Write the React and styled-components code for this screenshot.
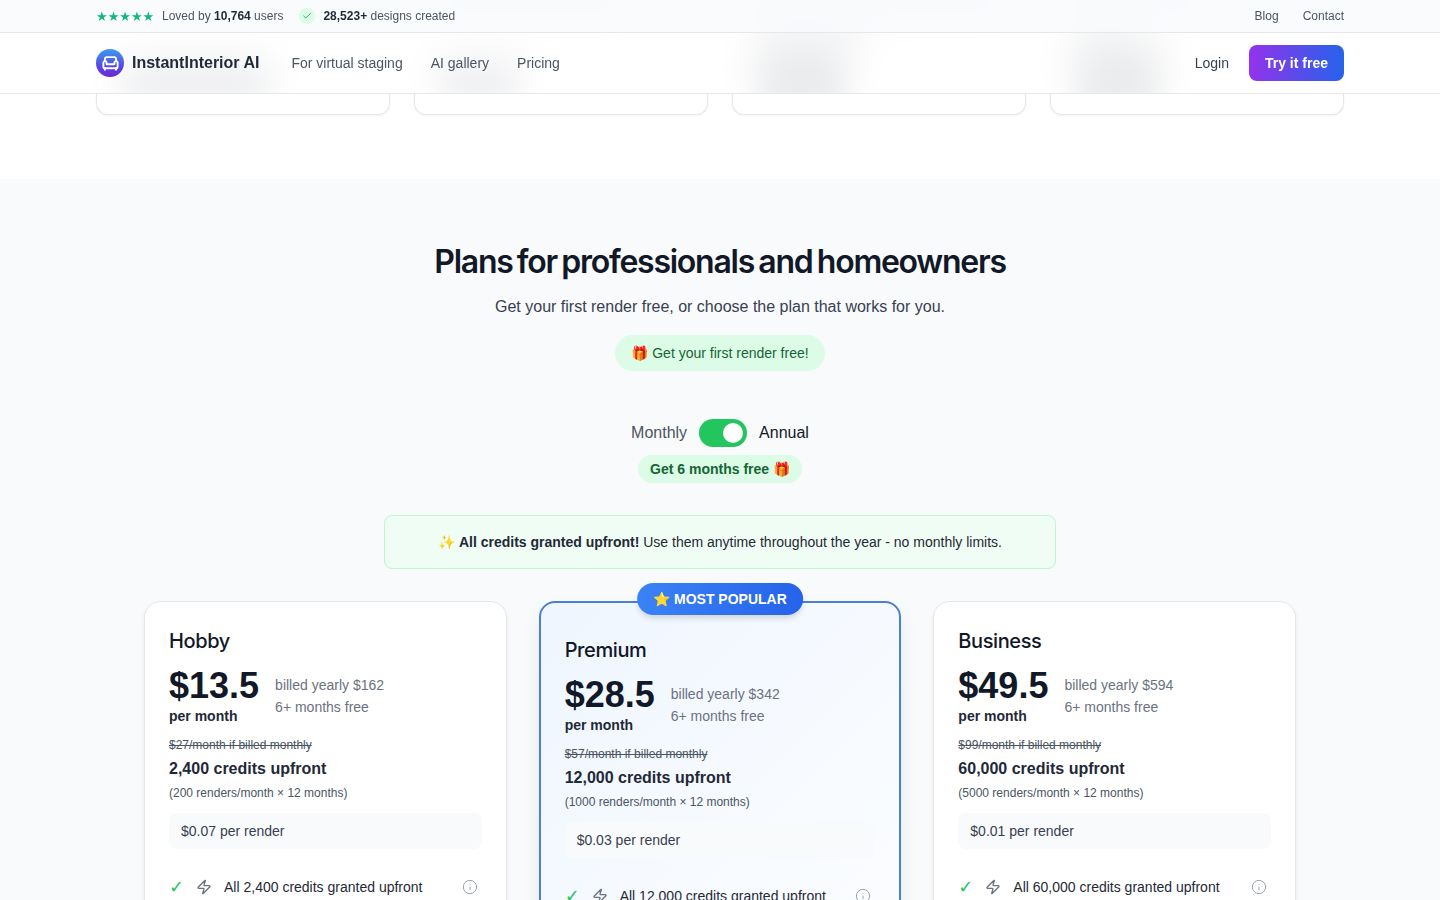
import React from 'react';
import styled, { createGlobalStyle } from 'styled-components';
import { Armchair, Check, Zap, Info } from 'lucide-react';

const Global = createGlobalStyle`
  html, body { margin: 0; padding: 0; height: 100%; overflow: hidden; background: #fff; }
  body { font-family: "Liberation Sans", Arial, sans-serif; color: #111827; }
  * { box-sizing: border-box; }
`;

const Page = styled.div`height: 900px; overflow: hidden;`;

const Header = styled.header`
  position: fixed; top: 0; left: 0; right: 0; z-index: 10;
  backdrop-filter: blur(16px);
  background: rgba(255,255,255,.85);
`;
const TopBar = styled.div`
  height: 33px; padding: 0 96px; display: flex; align-items: center; justify-content: space-between;
  border-bottom: 1px solid #e5e7eb; background: rgba(248,250,252,.8); font-size: 12px; color: #4b5563;
`;
const TopGroup = styled.div`display: flex; align-items: center; gap: ${p => p.$gap}px;`;
const Stars = styled.span`color: #10b981; font-size: 13px; width: 58px; white-space: nowrap; font-family: "DejaVu Sans", sans-serif;`;
const Strong = styled.strong`color: #1f2937; font-weight: 700;`;
const CheckDot = styled.span`
  width: 16px; height: 16px; border-radius: 50%; background: #dcfce7; color: #16a34a;
  display: inline-flex; align-items: center; justify-content: center;
`;
const TopLink = styled.span`color: #4b5563;`;

const Nav = styled.nav`
  height: 61px; padding: 0 96px; display: flex; align-items: center; justify-content: space-between;
  border-bottom: 1px solid #e5e7eb;
`;
const Brand = styled.div`display: flex; align-items: center; gap: 8px; margin-right: 32px;`;
const LogoMark = styled.span`
  width: 28px; height: 28px; border-radius: 50%;
  background: linear-gradient(180deg, #3b9bf0 0%, #5b3fe0 70%, #6d28d9 100%);
  display: flex; align-items: center; justify-content: center; color: #fff;
`;
const BrandName = styled.span`font-size: 16px; font-weight: 700; color: #1f2937;`;
const NavLeft = styled.div`display: flex; align-items: center;`;
const NavLinks = styled.div`display: flex; gap: 28px; font-size: 14px; color: #4b5563;`;
const NavRight = styled.div`display: flex; align-items: center; gap: 20px; font-size: 14px; color: #374151;`;
const TryButton = styled.span`
  height: 36px; padding: 0 16px; border-radius: 8px; display: flex; align-items: center;
  background: linear-gradient(90deg, #9333ea, #2563eb); color: #fff; font-weight: 700; font-size: 14px;
`;

const Gallery = styled.section`
  padding: 0 96px 64px; display: grid; grid-template-columns: repeat(4, 1fr); gap: 24px; background: #fff;
`;
const GalleryCard = styled.div`
  height: 115px; border: 1px solid #e5e7eb; border-top: 0; border-radius: 0 0 12px 12px;
  box-shadow: 0 1px 2px rgba(0,0,0,.05); background: #fff; overflow: hidden;
`;
const CardTop = styled.div`
  height: 93px; overflow: hidden; padding: 0 24px; display: flex; flex-direction: column; gap: 12px;
`;
const Smudge = styled.div`
  height: ${p => p.$h}px; width: ${p => p.$w}px; margin-top: ${p => p.$mt || 0}px;
  background: #6b7280; flex-shrink: 0; filter: blur(12px);
`;

const Pricing = styled.section`
  background: #f9fafb; padding: 65px 0 0; display: flex; flex-direction: column; align-items: center;
`;
const Title = styled.h2`
  margin: 0; font-family: Inter, sans-serif; font-size: 32px; line-height: 36px; font-weight: 600;
  letter-spacing: -1.25px; word-spacing: -2.5px; color: #111827;
`;
const Subtitle = styled.p`margin: 15px 0 0; font-size: 16px; line-height: 24px; color: #374151;`;
const FreePill = styled.div`
  margin-top: 16px; height: 36px; padding: 0 16px; border-radius: 999px; background: #dcfce7;
  color: #166534; font-size: 14px; display: flex; align-items: center;
`;
const ToggleRow = styled.div`
  margin-top: 48px; display: flex; align-items: center; gap: 12px; font-size: 16px;
`;
const ToggleLabel = styled.span`color: ${p => p.$on ? '#111827' : '#4b5563'};`;
const Toggle = styled.span`
  width: 48px; height: 28px; border-radius: 999px; background: #22c55e; display: flex; align-items: center;
  justify-content: flex-end; padding: 0 4px;
`;
const Knob = styled.span`width: 20px; height: 20px; border-radius: 50%; background: #fff;`;
const SavePill = styled.div`
  margin-top: 8px; height: 28px; padding: 0 12px; border-radius: 999px; background: #dcfce7;
  color: #166534; font-size: 14px; font-weight: 700; display: flex; align-items: center;
`;
const Notice = styled.div`
  margin-top: 32px; width: 672px; height: 54px; border: 1px solid #bbf7d0; border-radius: 8px; background: #f0fdf4;
  display: flex; align-items: center; justify-content: center; font-size: 14px; color: #1f2937; white-space: pre;
`;
const Cards = styled.div`
  margin-top: 32px; width: 1152px; display: grid; grid-template-columns: repeat(3, 1fr); gap: 32px; align-items: start;
`;
const Card = styled.article`
  position: relative; border-radius: 16px; padding: ${p => p.$popular ? '32px 24px 24px' : '24px'};
  border: ${p => p.$popular ? '2px solid #4a80d0' : '1px solid #e5e7eb'};
  background: ${p => p.$popular ? 'linear-gradient(135deg, #eff6ff, #fff)' : '#fff'};
  box-shadow: ${p => p.$popular ? '0 10px 25px -5px rgba(0,0,0,.1), 0 8px 10px -6px rgba(0,0,0,.1)' : '0 4px 6px -1px rgba(0,0,0,.08), 0 2px 4px -2px rgba(0,0,0,.06)'};
  height: 520px;
`;
const Badge = styled.div`
  position: absolute; top: -20px; left: 50%; transform: translateX(-50%); height: 32px; padding: 0 16px;
  border-radius: 999px; background: linear-gradient(90deg, #3b82f6, #2563eb); color: #fff; font-weight: 700; font-size: 14px;
  display: flex; align-items: center; white-space: nowrap; box-shadow: 0 4px 6px -1px rgba(0,0,0,.15);
`;
const PlanName = styled.h3`
  margin: 0; font-family: Inter, sans-serif; font-size: 20px; line-height: 30px; font-weight: 500; letter-spacing: -0.4px; color: #111827;
`;
const PriceRow = styled.div`display: flex; gap: 16px; margin-top: 11px;`;
const PriceCol = styled.div`display: flex; flex-direction: column;`;
const Price = styled.div`font-size: 36px; line-height: 38px; font-weight: 700; color: #111827;`;
const PerMonth = styled.div`font-size: 14px; line-height: 22px; font-weight: 700; color: #1f2937;`;
const Billed = styled.div`font-size: 14px; line-height: 22px; color: #6b7280; padding-top: 7px;`;
const Was = styled.div`margin-top: 10px; font-size: 12px; line-height: 16px; color: #4b5563; text-decoration: line-through;`;
const Credits = styled.div`margin-top: 4px; font-size: 16px; line-height: 24px; font-weight: 700; color: #1f2937;`;
const Renders = styled.div`margin-top: 3px; font-size: 12px; line-height: 18px; color: #4b5563;`;
const RenderBox = styled.div`
  margin-top: 11px; height: 36px; padding: 0 12px; border-radius: 8px; background: #f9fafb; display: flex; align-items: center;
  font-size: 14px; color: #374151;
`;
const Feature = styled.div`
  margin-top: 24px; display: flex; align-items: center; font-size: 14px; line-height: 28px; color: #1f2937; padding-right: 4px;
`;
const Tick = styled.span`width: 27px; color: #22c55e; font-size: 18px; font-family: "DejaVu Sans", sans-serif;`;
const FeatureIcon = styled.span`width: 28px; display: flex; color: #6b7280;`;
const FeatureText = styled.span`flex: 1;`;
const InfoIcon = styled.span`display: flex; color: #9ca3af;`;

const plans = [
  { name: 'Hobby', price: '$13.5', yearly: '$162', was: '$27', credits: '2,400', renders: '200', per: '$0.07' },
  { name: 'Premium', price: '$28.5', yearly: '$342', was: '$57', credits: '12,000', renders: '1000', per: '$0.03', popular: true },
  { name: 'Business', price: '$49.5', yearly: '$594', was: '$99', credits: '60,000', renders: '5000', per: '$0.01' },
];

export default function App() {
  return (
    <Page>
      <Global />
      <Header>
        <TopBar>
          <TopGroup $gap={16}>
            <TopGroup $gap={8}>
              <Stars>★★★★★</Stars>
              <span>Loved by <Strong>10,764</Strong> users</span>
            </TopGroup>
            <TopGroup $gap={8}>
              <CheckDot><Check size={10} strokeWidth={2} /></CheckDot>
              <span><Strong>28,523+</Strong> designs created</span>
            </TopGroup>
          </TopGroup>
          <TopGroup $gap={24}>
            <TopLink>Blog</TopLink>
            <TopLink>Contact</TopLink>
          </TopGroup>
        </TopBar>
        <Nav>
          <NavLeft>
            <Brand>
              <LogoMark><Armchair size={19} strokeWidth={2.4} /></LogoMark>
              <BrandName>InstantInterior AI</BrandName>
            </Brand>
            <NavLinks>
              <span>For virtual staging</span>
              <span>AI gallery</span>
              <span>Pricing</span>
            </NavLinks>
          </NavLeft>
          <NavRight>
            <span>Login</span>
            <TryButton>Try it free</TryButton>
          </NavRight>
        </Nav>
      </Header>

      <Gallery>
        <GalleryCard>
          <CardTop>
            <Smudge $w={150} $h={30} $mt={62} />
          </CardTop>
        </GalleryCard>
        <GalleryCard>
          <CardTop>
            <Smudge $w={190} $h={10} />
            <Smudge $w={80} $h={30} $mt={40} />
          </CardTop>
        </GalleryCard>
        <GalleryCard>
          <CardTop>
            <Smudge $w={245} $h={10} />
            <Smudge $w={115} $h={10} />
            <Smudge $w={90} $h={60} />
          </CardTop>
        </GalleryCard>
        <GalleryCard>
          <CardTop>
            <Smudge $w={125} $h={10} />
            <Smudge $w={55} $h={10} />
            <Smudge $w={85} $h={60} />
          </CardTop>
        </GalleryCard>
      </Gallery>

      <Pricing>
        <Title>Plans for professionals and homeowners</Title>
        <Subtitle>Get your first render free, or choose the plan that works for you.</Subtitle>
        <FreePill>🎁 Get your first render free!</FreePill>
        <ToggleRow>
          <ToggleLabel>Monthly</ToggleLabel>
          <Toggle><Knob /></Toggle>
          <ToggleLabel $on>Annual</ToggleLabel>
        </ToggleRow>
        <SavePill>Get 6 months free 🎁</SavePill>
        <Notice>✨ <strong>All credits granted upfront!</strong> Use them anytime throughout the year - no monthly limits.</Notice>
        <Cards>
          {plans.map(p => (
            <Card key={p.name} $popular={p.popular}>
              {p.popular && <Badge>⭐ MOST POPULAR</Badge>}
              <PlanName>{p.name}</PlanName>
              <PriceRow>
                <PriceCol>
                  <Price>{p.price}</Price>
                  <PerMonth>per month</PerMonth>
                </PriceCol>
                <Billed>billed yearly {p.yearly}<br />6+ months free</Billed>
              </PriceRow>
              <Was>{p.was}/month if billed monthly</Was>
              <Credits>{p.credits} credits upfront</Credits>
              <Renders>({p.renders} renders/month × 12 months)</Renders>
              <RenderBox>{p.per} per render</RenderBox>
              <Feature>
                <Tick>✓</Tick>
                <FeatureIcon><Zap size={16} /></FeatureIcon>
                <FeatureText>All {p.credits} credits granted upfront</FeatureText>
                <InfoIcon><Info size={16} strokeWidth={1.5} /></InfoIcon>
              </Feature>
            </Card>
          ))}
        </Cards>
      </Pricing>
    </Page>
  );
}
